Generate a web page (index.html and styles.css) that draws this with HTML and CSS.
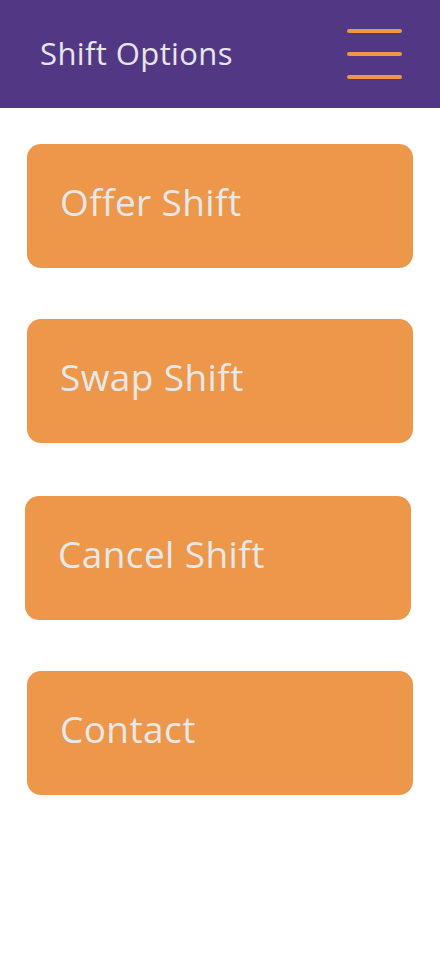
FILE: index.html
```html
<!DOCTYPE html>
<html lang="en">
<head>
    <meta charset="UTF-8">
    <meta name="viewport" content="width=device-width, initial-scale=1.0">
    <title>Shift Options</title>
    <link rel="stylesheet" href="styles.css">
</head>
<body>

    <!-- Top bar -->
    <header class="top-bar">
        <h1 class="title">Shift Options</h1>
        <button class="menu-btn" aria-label="Menu">
            <span></span>
            <span></span>
            <span></span>
        </button>
    </header>

    <!-- Options list -->
    <div class="option-list">
        <button class="option-btn">Offer Shift</button>
        <button class="option-btn">Swap Shift</button>
        <button class="option-btn shifted">Cancel Shift</button>
        <button class="option-btn">Contact</button>
    </div>

</body>
</html>
```

FILE: styles.css
```css
/* Reset default styles */
* {
    margin: 0;
    padding: 0;
    box-sizing: border-box;
}

body {
    background-color: #fff;
    font-family: "Open Sans", "Lato", sans-serif;
}

/* Top bar */
.top-bar {
    height: 108px;
    background-color: #523884;
    display: flex;
    align-items: center;
    justify-content: space-between;
    padding: 0 38px 0 40px;
}

.title {
    font-size: 31px;
    font-weight: normal;
    color: #e6e6ea;
    letter-spacing: 0.4px;
    margin-bottom: 2px;
}

.menu-btn {
    width: 55px;
    background: transparent;
    border: none;
    display: flex;
    flex-direction: column;
    gap: 19px;
    cursor: pointer;
}

.menu-btn span {
    display: block;
    height: 4px;
    border-radius: 2px;
    background-color: #ee9747;
}

/* Options */
.option-list {
    display: flex;
    flex-direction: column;
    gap: 51px;
    padding: 36px 27px 0 27px;
}

.option-btn {
    height: 124px;
    background-color: #ec974a;
    border: none;
    border-radius: 14px;
    color: #e8e8e8;
    font-family: inherit;
    font-size: 37px;
    letter-spacing: 0.4px;
    text-align: left;
    padding: 0 33px 10px;
    cursor: pointer;
}

.option-btn.shifted {
    margin: 2px 2px 0 -2px;
}
```
